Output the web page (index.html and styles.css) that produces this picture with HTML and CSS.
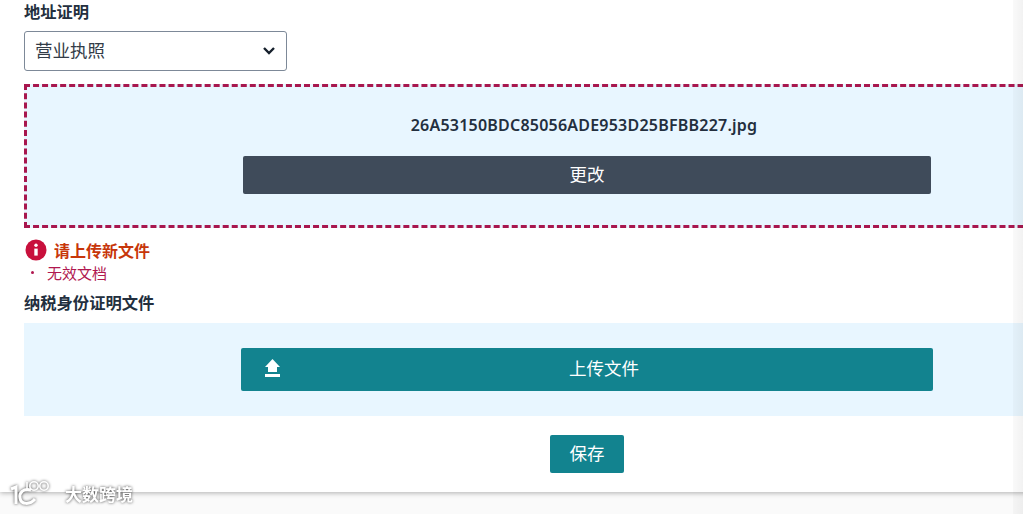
FILE: index.html
```html
<!DOCTYPE html>
<html lang="zh">
<head>
    <meta charset="UTF-8">
    <meta name="viewport" content="width=device-width, initial-scale=1.0">
    <title>地址证明</title>
    <link rel="stylesheet" href="styles.css">
</head>
<body>
    <div class="page">
        <div class="card">
            <label class="field-label" for="proofType">地址证明</label>
            <div class="select-box" id="proofType">
                <span>营业执照</span>
                <svg class="chevron" width="14" height="10" viewBox="0 0 14 10">
                    <path d="M2 2 L7 7 L12 2" fill="none" stroke="#16202c" stroke-width="2.4"/>
                </svg>
            </div>

            <div class="dropzone dropzone-error">
                <p class="file-name">26A53150BDC85056ADE953D25BFBB227.jpg</p>
                <button class="btn btn-dark" type="button">更改</button>
            </div>

            <div class="error-title">
                <svg class="error-icon" width="22" height="22" viewBox="0 0 22 22">
                    <circle cx="11" cy="11" r="10.5" fill="#c8103c"/>
                    <circle cx="11" cy="6.2" r="1.7" fill="#fff"/>
                    <path d="M9.3 9.6 H12.7 V16.6 H9.3 Z" fill="#fff"/>
                </svg>
                <span>请上传新文件</span>
            </div>
            <ul class="error-list">
                <li>无效文档</li>
            </ul>

            <label class="field-label tax-label">纳税身份证明文件</label>
            <div class="dropzone upload-zone">
                <button class="btn btn-upload" type="button">
                    <svg class="upload-icon" width="17" height="18" viewBox="0 0 17 18">
                        <path d="M8.5 0 L16 8 H13 V13 H4 V8 H1 Z" fill="#fff"/>
                        <rect x="1" y="15" width="15" height="3" fill="#fff"/>
                    </svg>
                    <span class="btn-text">上传文件</span>
                </button>
            </div>

            <div class="actions">
                <button class="btn btn-save" type="button">保存</button>
            </div>
        </div>

        <div class="scroll-shade"></div>

        <div class="watermark">
            <svg width="50" height="26" viewBox="0 0 50 26">
                <g fill="none" stroke="#fff" stroke-width="3">
                    <path d="M3 9 L8 7 V24"/>
                    <path d="M23 10 C15 8 11 13 12 18 C13 25 22 25 27 19"/>
                </g>
                <g fill="none" stroke="#fff" stroke-width="1.6">
                    <path d="M19 2 V11"/>
                    <circle cx="26" cy="6" r="4.2"/>
                    <circle cx="36" cy="6" r="4.2"/>
                </g>
            </svg>
            <span>大数跨境</span>
        </div>
    </div>
</body>
</html>
```

FILE: styles.css
```css
body {
    margin: 0;
    font-family: "Noto Sans", "Noto Sans CJK SC", sans-serif;
    color: #232f3e;
    background-color: #fafafa;
}
.page {
    position: relative;
    width: 100%;
    height: 514px;
    overflow: hidden;
}
.card {
    box-sizing: border-box;
    width: 1174px;
    height: 492px;
    padding: 0 24px;
    background-color: #fff;
    box-shadow: 0 1px 5px rgba(0, 0, 0, 0.3);
}
.field-label {
    display: block;
    height: 24px;
    font-size: 16.3px;
    font-weight: 700;
    line-height: 24px;
}
.select-box {
    box-sizing: border-box;
    display: flex;
    align-items: center;
    justify-content: space-between;
    width: 263px;
    height: 40px;
    margin-top: 7px;
    padding: 0 10px;
    border: 1px solid #7d8998;
    border-radius: 3px;
    font-size: 17.5px;
    color: #333c48;
}
.select-box span {
    margin-bottom: 4px;
}
.dropzone {
    box-sizing: border-box;
    display: flex;
    flex-direction: column;
    align-items: center;
    width: 1126px;
    background-color: #e8f6ff;
}
.dropzone-error {
    height: 144px;
    margin-top: 13px;
    padding-top: 26px;
    border: 3px dashed #a8174e;
}
.file-name {
    margin: 0 6px 19px 0;
    font-size: 16px;
    font-weight: 600;
    letter-spacing: 0.22px;
    line-height: 24px;
}
.btn {
    box-sizing: border-box;
    border: none;
    border-radius: 2px;
    padding: 0 0 4px;
    color: #fff;
    font-family: inherit;
    font-size: 17.5px;
    cursor: pointer;
}
.btn-dark {
    width: 688px;
    height: 38px;
    background-color: #3f4b5a;
}
.error-title {
    display: flex;
    align-items: center;
    height: 22px;
    margin-top: 11px;
    padding-left: 1px;
    font-size: 16px;
    font-weight: 700;
    color: #c7360a;
}
.error-icon {
    margin-right: 7px;
}
.error-list {
    margin: 0;
    padding: 0 0 0 23px;
    list-style: none;
    font-size: 15px;
    line-height: 24px;
    color: #b0174f;
}
.error-list li {
    position: relative;
}
.error-list li::before {
    content: "";
    position: absolute;
    left: -16px;
    top: 10px;
    width: 3px;
    height: 3px;
    border-radius: 50%;
    background-color: #b0174f;
}
.tax-label {
    margin-top: 6px;
}
.upload-zone {
    height: 93px;
    margin-top: 8px;
    padding-top: 25px;
}
.btn-upload {
    display: flex;
    align-items: center;
    width: 692px;
    height: 43px;
    padding: 0 6px 4px 23px;
    background-color: #12838f;
}
.btn-text {
    flex: 1;
    text-align: center;
}
.actions {
    display: flex;
    justify-content: center;
    width: 1126px;
    margin-top: 19px;
}
.btn-save {
    width: 74px;
    height: 38px;
    background-color: #12838f;
}
/* overlays */
.scroll-shade {
    position: absolute;
    top: 0;
    right: 0;
    bottom: 0;
    width: 10px;
    background: linear-gradient(to right, rgba(0, 0, 0, 0.025), rgba(0, 0, 0, 0.05));
}
.watermark {
    position: absolute;
    left: 8px;
    top: 480px;
    display: flex;
    align-items: center;
    gap: 7px;
    font-size: 17px;
    font-weight: 700;
    color: #fff;
    filter: drop-shadow(0 0 1.5px rgba(0, 0, 0, 0.7));
}
```
